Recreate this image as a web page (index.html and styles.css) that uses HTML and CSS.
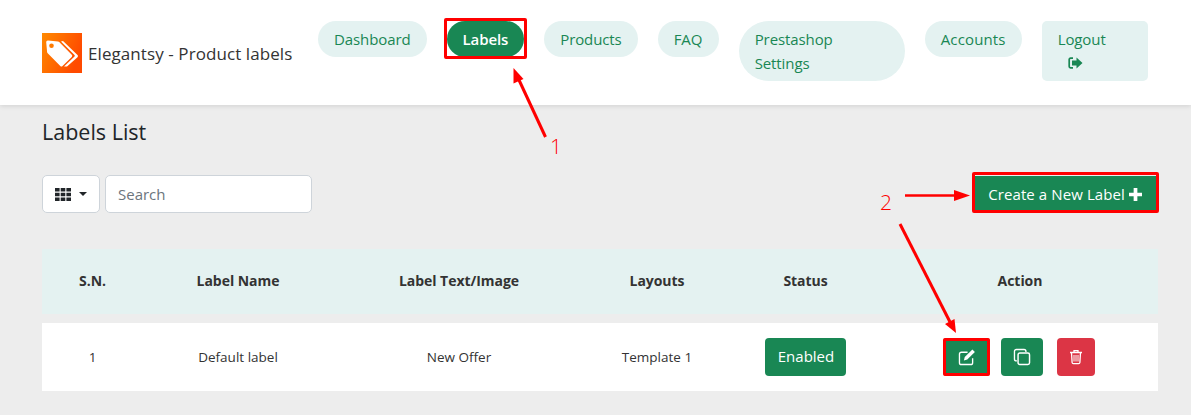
FILE: index.html
```html
<!DOCTYPE html>
<html lang="en">
<head>
<meta charset="utf-8">
<title>Labels List</title>
<link rel="stylesheet" href="styles.css">
</head>
<body>
<header class="topbar">
  <div class="brand">
    <svg class="brand-logo" viewBox="0 0 40 40" aria-hidden="true">
      <defs><linearGradient id="lg" x1="0" y1="0" x2="1" y2="0.4"><stop offset="0" stop-color="#ff8a00"/><stop offset="1" stop-color="#ff4a00"/></linearGradient></defs>
      <rect width="40" height="40" fill="url(#lg)"/>
      <path d="M19 8.500l2-.5L35.500 22a1.600 1.600 0 0 1 0 2.200L25 33.500h-3l10.500-10a1 1 0 0 0 0-1.400z" fill="#fff"/>
      <path d="M6 7.500L16 8.500a2 2 0 0 1 1.200.6L29.800 21.700a1.600 1.600 0 0 1 0 2.200L20.500 33a1.600 1.600 0 0 1-2.200 0L5.700 20.300a2 2 0 0 1-.6-1.200L4.200 9.300a1.700 1.700 0 0 1 1.800-1.800z" fill="#fff"/>
      <circle cx="9.500" cy="12.800" r="2.300" fill="#ff7a00"/>
    </svg>
    <span class="brand-name">Elegantsy - Product labels</span>
  </div>
  <nav class="nav">
    <a class="pill">Dashboard</a>
    <a class="pill active">Labels</a>
    <a class="pill">Products</a>
    <a class="pill faq">FAQ</a>
    <a class="pill wide">Prestashop Settings</a>
    <a class="pill accounts">Accounts</a>
    <a class="pill logout">Logout
      <svg class="logout-icon" viewBox="0 0 16 14" aria-hidden="true"><path d="M6 2.200H3.500A1.300 1.300 0 0 0 2.200 3.500v7a1.300 1.300 0 0 0 1.300 1.300H6" fill="none" stroke="currentColor" stroke-width="1.700"/><path d="M9.500 1.500L15.500 7l-6 5.500V9.500H5v-5h4.500z" fill="currentColor"/></svg>
    </a>
  </nav>
</header>
<main class="content">
  <h1 class="title">Labels List</h1>
  <div class="toolbar">
    <div class="tools-left">
      <button class="grid-btn" type="button" aria-label="Columns">
        <svg class="grid-icon" viewBox="0 0 16 13" aria-hidden="true"><path d="M0 0h4.600v3.600H0zM5.700 0h4.600v3.600H5.700zM11.400 0H16v3.600h-4.600zM0 4.700h4.600v3.600H0zM5.700 4.700h4.600v3.600H5.700zM11.400 4.700H16v3.600h-4.600zM0 9.400h4.600V13H0zM5.700 9.400h4.600V13H5.700zM11.400 9.400H16V13h-4.600z" fill="#212529"/></svg>
        <span class="caret"></span>
      </button>
      <input class="search" type="text" placeholder="Search">
    </div>
    <a class="create-btn">Create a New Label
      <svg class="plus" viewBox="0 0 14 14" aria-hidden="true"><path d="M5 0h4v5h5v4H9v5H5V9H0V5h5z" fill="#fff"/></svg>
    </a>
  </div>
  <table class="table">
    <thead>
      <tr>
        <th class="c1">S.N.</th>
        <th class="c2">Label Name</th>
        <th class="c3">Label Text/Image</th>
        <th class="c4">Layouts</th>
        <th class="c5">Status</th>
        <th class="c6">Action</th>
      </tr>
    </thead>
    <tbody>
      <tr>
        <td>1</td>
        <td>Default label</td>
        <td>New Offer</td>
        <td>Template 1</td>
        <td><a class="status">Enabled</a></td>
        <td>
          <div class="actions">
            <a class="act edit"><svg viewBox="0 0 16 16" aria-hidden="true"><path d="M13 9v4a1.700 1.700 0 0 1-1.700 1.700H3A1.700 1.700 0 0 1 1.300 13V5.500A1.700 1.700 0 0 1 3 3.800h5.500" fill="none" stroke="#fff" stroke-width="1.200"/><path d="M12.800 1.300l2.200 2.200-6.800 6.800-3 .8.800-3z" fill="#fff"/></svg></a>
            <a class="act copy"><svg viewBox="0 0 16 16" aria-hidden="true"><path d="M3.500 11.500H3A1.700 1.700 0 0 1 1.300 9.800V3A1.700 1.700 0 0 1 3 1.300h6.800A1.700 1.700 0 0 1 11.500 3v.5" fill="none" stroke="#fff" stroke-width="1.200"/><rect x="4.500" y="4.500" width="10.200" height="10.200" rx="1.500" fill="none" stroke="#fff" stroke-width="1.300"/></svg></a>
            <a class="act del"><svg viewBox="0 0 16 16" aria-hidden="true"><path d="M2 3.500h12M6 3.300V1.700h4v1.600" fill="none" stroke="#fff" stroke-width="1.300"/><path d="M3.500 3.500l.6 10a1.300 1.300 0 0 0 1.300 1.200h5.200a1.300 1.300 0 0 0 1.300-1.200l.6-10" fill="none" stroke="#fff" stroke-width="1.300"/><path d="M6 6v6.500M8 6v6.500M10 6v6.500" stroke="#fff" stroke-width="1"/></svg></a>
          </div>
        </td>
      </tr>
    </tbody>
  </table>
</main>
<div class="annot box-labels"></div>
<div class="annot box-create"></div>
<div class="annot box-edit"></div>
<svg class="annot arrows" viewBox="0 0 1191 415" aria-hidden="true">
  <path d="M545.500 137L519 80" stroke="#f00" stroke-width="3" fill="none"/>
  <path d="M513.500 68L523.500 79 513.500 83.500z" fill="#f00"/>
  <path d="M905 195.500h50" stroke="#f00" stroke-width="2.500" fill="none"/>
  <path d="M970 195.500L954 190v11z" fill="#f00"/>
  <path d="M900 224L950 322" stroke="#f00" stroke-width="3" fill="none"/>
  <path d="M956 333L945 324 954.500 319z" fill="#f00"/>
</svg>
<span class="annot num n1">1</span>
<span class="annot num n2">2</span>
</body>
</html>
```
FILE: styles.css
```css
* { box-sizing: border-box; }
html, body { margin: 0; padding: 0; }
body {
  position: relative;
  width: 1191px;
  height: 415px;
  overflow: hidden;
  background: #ededed;
  color: #212529;
  font-family: "Open Sans", "Noto Sans", sans-serif;
  font-size: 15px;
}
.topbar {
  height: 105px;
  background: #fff;
  box-shadow: 0 1px 5px rgba(0,0,0,.12);
  display: flex;
  align-items: flex-start;
  padding: 21px 43px 0 42px;
}
.brand { display: flex; align-items: center; gap: 6px; padding-top: 12px; width: 276px; flex: none; }
.brand-logo { width: 40px; height: 40px; display: block; flex: none; }
.brand-name { font-size: 17px; color: #333; white-space: nowrap; letter-spacing: .08px; }
.nav { display: flex; align-items: flex-start; gap: 20px; }
.pill {
  display: block;
  padding: 6px 16px;
  line-height: 24px;
  border-radius: 30px;
  background: #e4f2f1;
  color: #198754;
  font-size: 15px;
  white-space: nowrap;
  letter-spacing: -.1px;
}
.pill.active { background: #198754; color: #fff; font-weight: 600; }
.pill.faq { width: 61px; }
.pill.wide { width: 166px; white-space: normal; }
.pill.accounts { width: 97px; letter-spacing: .15px; }
.pill.logout { width: 106px; border-radius: 5px; white-space: normal; }
.logout-icon { display: block; width: 16px; height: 14px; margin: 5px 0 5px 9px; }
.content { padding: 0 33px 0 42px; }
.title { margin: 13px 0 0; font-size: 21.5px; line-height: 28px; font-weight: 400; color: #212529; }
.toolbar { display: flex; justify-content: space-between; align-items: center; margin-top: 29px; height: 38px; }
.tools-left { display: flex; gap: 5px; }
.grid-btn {
  width: 58px; height: 38px; padding: 0;
  background: #fff;
  border: 1px solid #ced4da;
  border-radius: 5px;
  display: flex; align-items: center; justify-content: center; gap: 8px;
}
.grid-icon { width: 16px; height: 13px; display: block; }
.caret { width: 0; height: 0; border-left: 4px solid transparent; border-right: 4px solid transparent; border-top: 4px solid #212529; }
.search {
  width: 207px; height: 38px;
  border: 1px solid #ced4da;
  border-radius: 5px;
  background: #fff;
  padding: 0 12px;
  font: 15px "Open Sans", "Noto Sans", sans-serif;
  color: #212529;
}
.search::placeholder { color: #6c757d; opacity: 1; }
.create-btn {
  display: flex; align-items: center; gap: 4px;
  height: 36px;
  margin-right: 2px;
  padding: 0 14px;
  background: #198754;
  color: #fff;
  font-size: 15px;
  white-space: nowrap;
  letter-spacing: .1px;
}
.plus { width: 13px; height: 13px; display: block; }
.table {
  width: 1116px;
  margin-top: 27px;
  border-collapse: separate;
  border-spacing: 0 9px;
  table-layout: fixed;
  text-align: center;
  color: #333;
}
.c1 { width: 101px; }
.c2 { width: 190px; }
.c3 { width: 252px; }
.c4 { width: 144px; }
.c5 { width: 153px; }
.c6 { width: 276px; }
.table th { height: 65px; background: #e4f2f1; font-size: 14px; font-weight: 700; padding: 0 0 2px; letter-spacing: -.05px; }
.table td { height: 68px; background: #fff; padding: 0; font-size: 13.5px; font-weight: 500; }
.status {
  display: inline-block;
  width: 81px; height: 38px; line-height: 37px;
  background: #198754; color: #fff;
  border-radius: 4px;
  font-size: 15px;
  font-weight: 400;
  padding-left: 1px;
  vertical-align: middle;
}
.actions { display: flex; justify-content: flex-start; padding-left: 61px; }
.act {
  height: 38px; border-radius: 4px;
  display: flex; align-items: center; justify-content: center;
}
.act svg { width: 16px; height: 16px; display: block; }
.edit { width: 47px; background: #198754; margin-right: 11px; }
.edit svg { width: 18px; height: 18px; }
.copy { width: 42px; background: #198754; margin-right: 14px; }
.copy svg { width: 18px; height: 18px; }
.del { width: 38px; background: #dc3545; }
.annot { position: absolute; pointer-events: none; }
.box-labels { left: 444px; top: 18px; width: 83px; height: 41px; border: 3px solid #f00; border-radius: 2px; }
.box-create { left: 972px; top: 172px; width: 187px; height: 41px; border: 3px solid #f00; border-radius: 2px; }
.box-edit { left: 943px; top: 338px; width: 47px; height: 38px; border: 3px solid #f00; border-radius: 2px; }
.arrows { left: 0; top: 0; width: 1191px; height: 415px; }
.num { color: #f00; font-size: 21px; font-weight: 300; line-height: 24px; }
.n1 { left: 550px; top: 134px; }
.n2 { left: 880px; top: 190px; }
```
